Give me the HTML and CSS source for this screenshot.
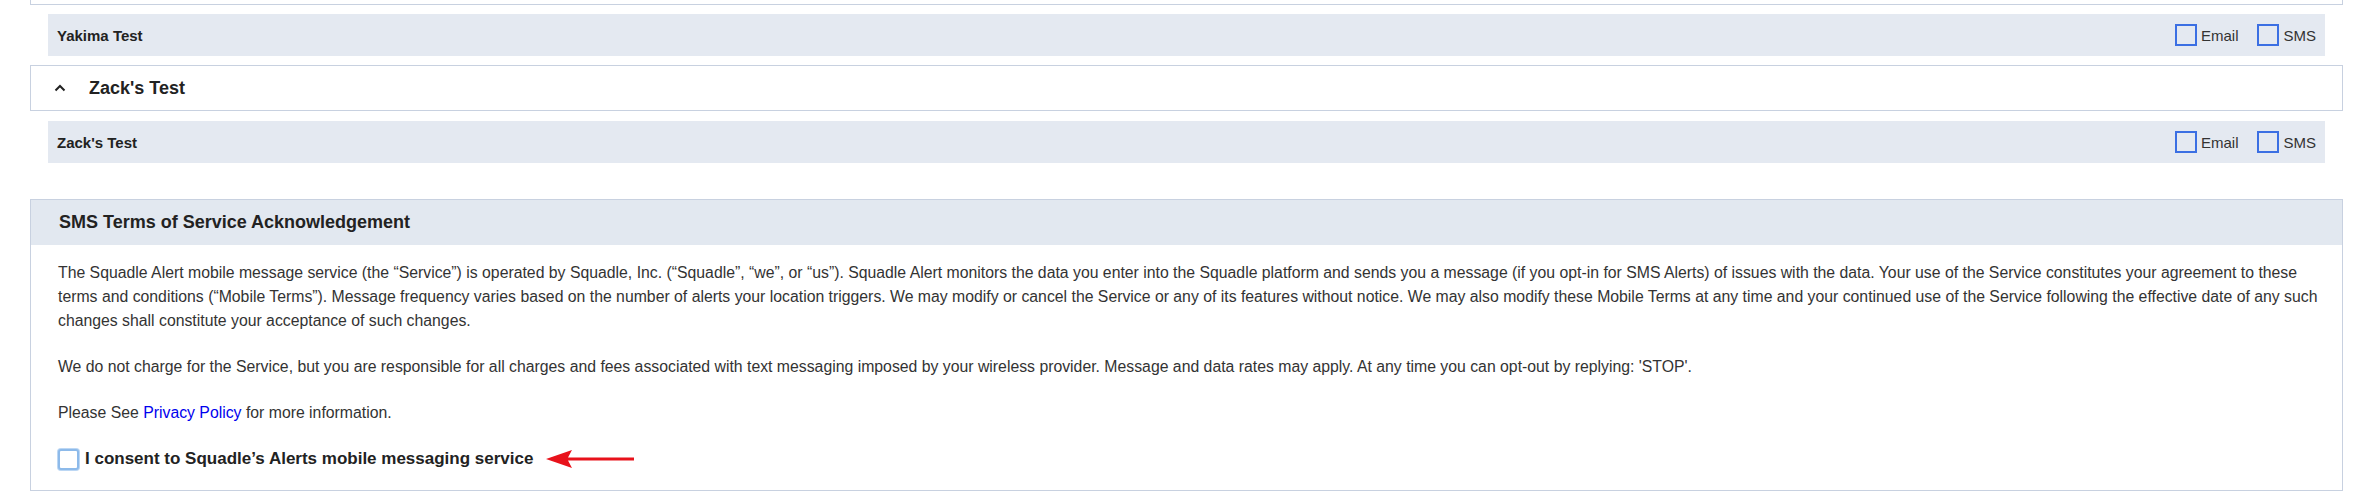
FILE: index.html
```html
<!DOCTYPE html>
<html lang="en">
<head>
    <meta charset="UTF-8">
    <meta name="viewport" content="width=device-width, initial-scale=1.0">
    <title>Alert Subscriptions</title>
    <link rel="stylesheet" href="styles.css">
</head>
<body>
    <div class="page">
        <div class="group group-end"></div>

        <div class="location-row">
            <span class="location-name">Yakima Test</span>
            <div class="channels">
                <label class="channel"><input type="checkbox"> Email</label>
                <label class="channel"><input type="checkbox"> SMS</label>
            </div>
        </div>

        <div class="group group-head">
            <svg class="chevron" width="12" height="8" viewBox="0 0 12 8">
                <polyline points="1.5,6.5 6,2 10.5,6.5" fill="none" stroke="#222" stroke-width="2"/>
            </svg>
            <span class="group-title">Zack's Test</span>
        </div>

        <div class="location-row">
            <span class="location-name">Zack's Test</span>
            <div class="channels">
                <label class="channel"><input type="checkbox"> Email</label>
                <label class="channel"><input type="checkbox"> SMS</label>
            </div>
        </div>

        <div class="terms">
            <div class="terms-header">SMS Terms of Service Acknowledgement</div>
            <div class="terms-body">
                <p>The Squadle Alert mobile message service (the “Service”) is operated by Squadle, Inc. (“Squadle”, “we”, or “us”). Squadle Alert monitors the data you enter into the Squadle platform and sends you a message (if you opt-in for SMS Alerts) of issues with the data. Your use of the Service constitutes your agreement to these terms and conditions (“Mobile Terms”). Message frequency varies based on the number of alerts your location triggers. We may modify or cancel the Service or any of its features without notice. We may also modify these Mobile Terms at any time and your continued use of the Service following the effective date of any such changes shall constitute your acceptance of such changes.</p>
                <p>We do not charge for the Service, but you are responsible for all charges and fees associated with text messaging imposed by your wireless provider. Message and data rates may apply. At any time you can opt-out by replying: 'STOP'.</p>
                <p>Please See <a href="#">Privacy Policy</a> for more information.</p>
                <div class="consent">
                    <label><input type="checkbox"> I consent to Squadle’s Alerts mobile messaging service</label>
                    <svg class="arrow" width="88" height="18" viewBox="0 0 88 18">
                        <polygon points="0,9 26,0 22,7.5 88,7.5 88,10.5 22,10.5 26,18" fill="#e8121b"/>
                    </svg>
                </div>
            </div>
        </div>
    </div>
</body>
</html>
```

FILE: styles.css
```css
body {
    margin: 0;
    font-family: "Liberation Sans", Arial, sans-serif;
    font-size: 15px;
    color: #333;
    background-color: #fff;
}
.page {
    padding: 0 33px 0 30px;
}
.group {
    border: 1px solid #c8d1e0;
    background-color: #fff;
}
.group-end {
    height: 4px;
    border-top: none;
}
.group-head {
    display: flex;
    align-items: center;
    height: 44px;
    margin-top: 9px;
    padding-left: 23px;
}
.chevron {
    margin-right: 23px;
}
.group-title {
    font-size: 18px;
    font-weight: bold;
    color: #222;
}
.location-row {
    display: flex;
    align-items: center;
    justify-content: space-between;
    height: 42px;
    margin: 9px 18px 0 18px;
    padding: 0 9px;
    background-color: #e4e9f1;
}
.group-head + .location-row {
    margin-top: 10px;
}
.location-name {
    font-weight: bold;
    color: #222;
}
.channels {
    display: flex;
    gap: 19px;
}
.channel {
    display: flex;
    align-items: center;
    gap: 4px;
    color: #333;
}
.channel input {
    appearance: none;
    width: 22px;
    height: 22px;
    margin: 0;
    border: 2px solid #3b6fe3;
    background-color: transparent;
}
.terms {
    margin-top: 36px;
    border: 1px solid #c8d1e0;
}
.terms-header {
    height: 45px;
    display: flex;
    align-items: center;
    padding-left: 28px;
    background-color: #e2e8f0;
    font-size: 18px;
    font-weight: bold;
    color: #222;
}
.terms-body {
    padding: 16px 10px 19px 27px;
    font-size: 15.8px;
    line-height: 24px;
}
.terms-body p {
    margin: 0 0 22px 0;
}
.terms-body a {
    color: #0000ee;
    text-decoration: none;
}
.consent {
    display: flex;
    align-items: center;
}
.consent label {
    display: flex;
    align-items: center;
    gap: 6px;
    font-size: 17px;
    font-weight: bold;
    color: #222;
}
.consent input {
    appearance: none;
    width: 21px;
    height: 21px;
    margin: 0;
    border: 2px solid #8dbaea;
    border-radius: 3px;
    box-shadow: 0 0 0 1px #bcd7f4;
    background-color: #fff;
}
.arrow {
    margin-left: 13px;
}
```
